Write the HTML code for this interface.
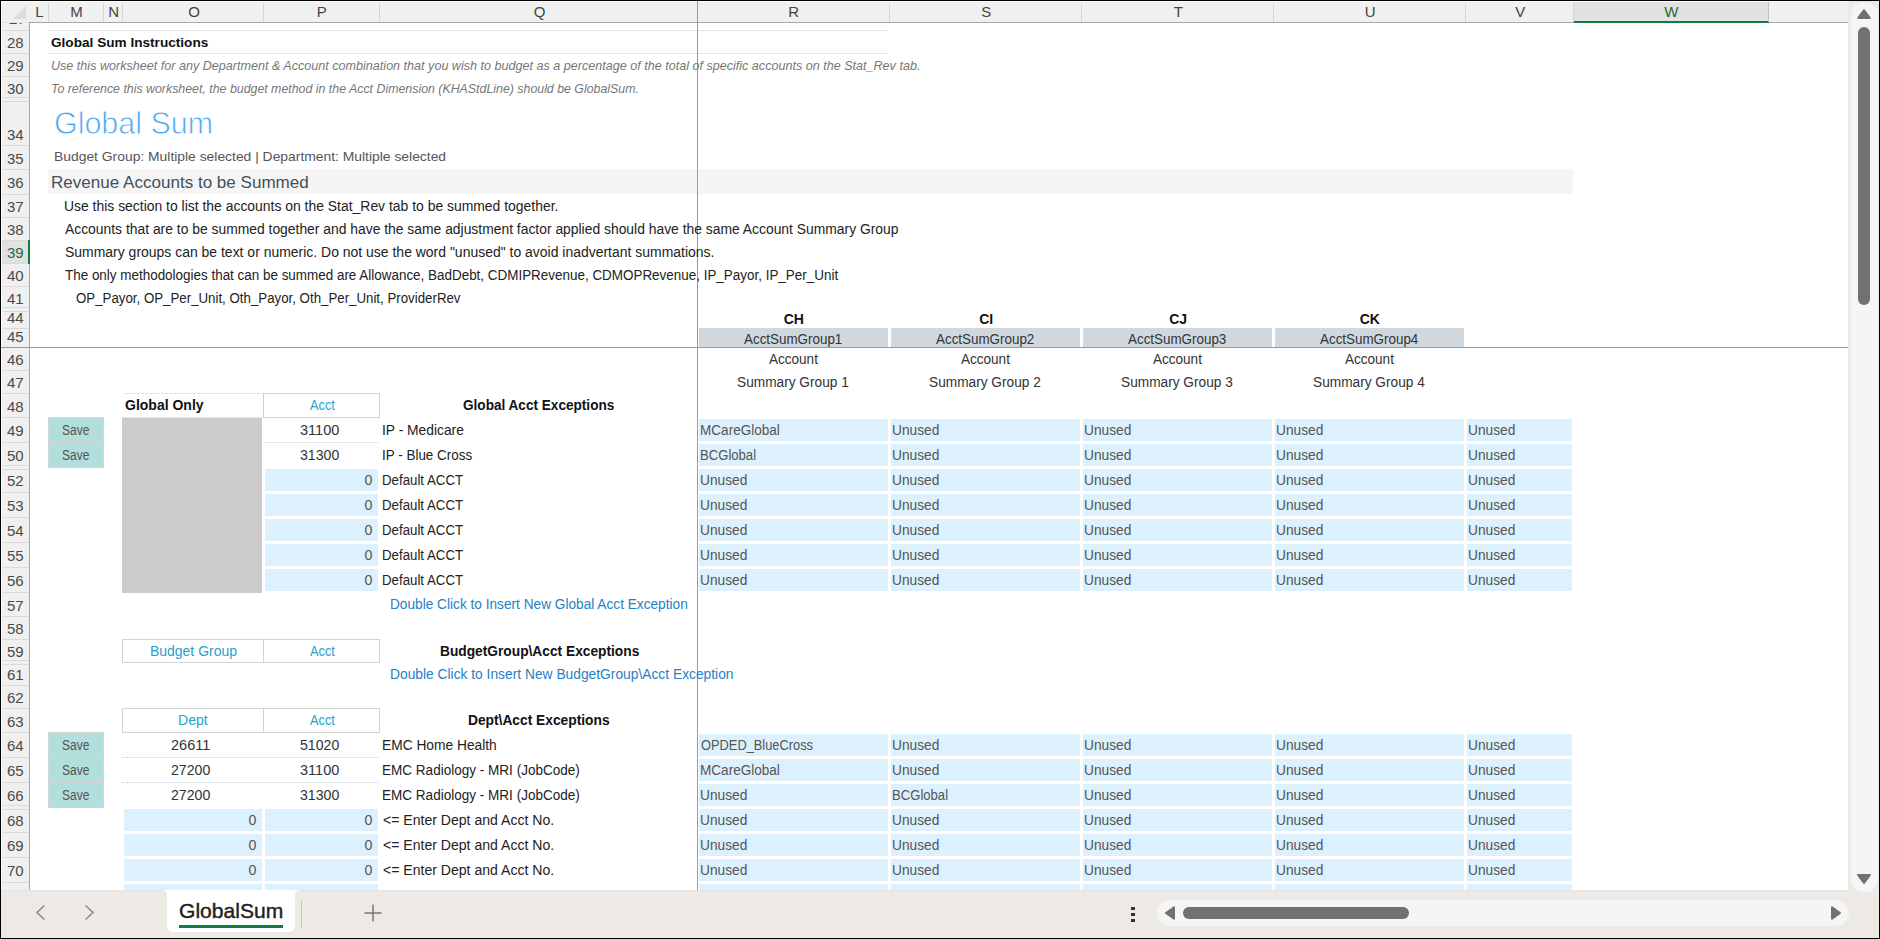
<!DOCTYPE html>
<html lang="en"><head><meta charset="utf-8"><title>GlobalSum</title>
<style>
html,body{margin:0;padding:0;background:#fff;}
body{width:1880px;height:939px;position:relative;overflow:hidden;font-family:'Liberation Sans', sans-serif;}
#app div,#app svg,#app span{position:absolute;}
#app span{white-space:pre;transform-origin:0 0;}
#app{position:absolute;left:0;top:0;width:1880px;height:939px;overflow:hidden;}
</style></head><body><div id="app">
<div style="left:0px;top:0px;width:1880px;height:939px;background:#000;"></div>
<div style="left:1px;top:1px;width:1878px;height:937px;background:#fff;"></div>
<div style="left:2px;top:2px;width:1846px;height:20px;background:#f0f0f0;"></div>
<div style="left:2px;top:22px;width:27px;height:1px;background:#e2e2e2;"></div>
<div style="left:29px;top:22px;width:1819px;height:1px;background:#a8a8a8;"></div>
<div style="left:2px;top:23px;width:27px;height:867px;background:#f0f0f0;"></div>
<div style="left:29px;top:22px;width:1px;height:868px;background:#a8a8a8;"></div>
<svg style="left:12px;top:5px" width="15" height="15" viewBox="0 0 15 15"><path d="M14 0.7V14H0.7Z" fill="#dddddd"/></svg>
<div style="left:48px;top:3px;width:1px;height:19px;background:#d6d6d6;"></div>
<div style="left:103px;top:3px;width:1px;height:19px;background:#d6d6d6;"></div>
<div style="left:122px;top:3px;width:1px;height:19px;background:#d6d6d6;"></div>
<div style="left:263px;top:3px;width:1px;height:19px;background:#d6d6d6;"></div>
<div style="left:379px;top:3px;width:1px;height:19px;background:#d6d6d6;"></div>
<div style="left:697px;top:3px;width:1px;height:19px;background:#d6d6d6;"></div>
<div style="left:889px;top:3px;width:1px;height:19px;background:#d6d6d6;"></div>
<div style="left:1081px;top:3px;width:1px;height:19px;background:#d6d6d6;"></div>
<div style="left:1273px;top:3px;width:1px;height:19px;background:#d6d6d6;"></div>
<div style="left:1465px;top:3px;width:1px;height:19px;background:#d6d6d6;"></div>
<div style="left:1573px;top:3px;width:1px;height:19px;background:#d6d6d6;"></div>
<div style="left:1574px;top:2px;width:195px;height:19px;background:#e1e1e1;"></div>
<div style="left:1574px;top:21px;width:195px;height:2px;background:#107c41;"></div>
<div style="left:1848px;top:3px;width:1px;height:19px;background:#d6d6d6;"></div>
<div style="left:1768px;top:2px;width:1px;height:20px;background:#c4c4c4;"></div>
<div style="left:2px;top:30px;width:27px;height:1px;background:#dadada;"></div>
<div style="left:2px;top:53px;width:27px;height:1px;background:#dadada;"></div>
<div style="left:2px;top:76px;width:27px;height:1px;background:#dadada;"></div>
<div style="left:2px;top:97px;width:27px;height:1px;background:#dadada;"></div>
<div style="left:2px;top:101px;width:27px;height:1px;background:#dadada;"></div>
<div style="left:2px;top:145px;width:27px;height:1px;background:#dadada;"></div>
<div style="left:2px;top:169px;width:27px;height:1px;background:#dadada;"></div>
<div style="left:2px;top:194px;width:27px;height:1px;background:#dadada;"></div>
<div style="left:2px;top:217px;width:27px;height:1px;background:#dadada;"></div>
<div style="left:2px;top:240px;width:27px;height:1px;background:#dadada;"></div>
<div style="left:2px;top:263px;width:27px;height:1px;background:#dadada;"></div>
<div style="left:2px;top:241px;width:27px;height:22px;background:#e1e1e1;"></div>
<div style="left:28px;top:240px;width:2px;height:24px;background:#107c41;"></div>
<div style="left:2px;top:286px;width:27px;height:1px;background:#dadada;"></div>
<div style="left:2px;top:307px;width:27px;height:1px;background:#dadada;"></div>
<div style="left:2px;top:311px;width:27px;height:1px;background:#dadada;"></div>
<div style="left:2px;top:328px;width:27px;height:1px;background:#dadada;"></div>
<div style="left:2px;top:347px;width:27px;height:1px;background:#dadada;"></div>
<div style="left:2px;top:370px;width:27px;height:1px;background:#dadada;"></div>
<div style="left:2px;top:393px;width:27px;height:1px;background:#dadada;"></div>
<div style="left:2px;top:417px;width:27px;height:1px;background:#dadada;"></div>
<div style="left:2px;top:442px;width:27px;height:1px;background:#dadada;"></div>
<div style="left:2px;top:465px;width:27px;height:1px;background:#dadada;"></div>
<div style="left:2px;top:469px;width:27px;height:1px;background:#dadada;"></div>
<div style="left:2px;top:492px;width:27px;height:1px;background:#dadada;"></div>
<div style="left:2px;top:517px;width:27px;height:1px;background:#dadada;"></div>
<div style="left:2px;top:542px;width:27px;height:1px;background:#dadada;"></div>
<div style="left:2px;top:567px;width:27px;height:1px;background:#dadada;"></div>
<div style="left:2px;top:592px;width:27px;height:1px;background:#dadada;"></div>
<div style="left:2px;top:616px;width:27px;height:1px;background:#dadada;"></div>
<div style="left:2px;top:639px;width:27px;height:1px;background:#dadada;"></div>
<div style="left:2px;top:660px;width:27px;height:1px;background:#dadada;"></div>
<div style="left:2px;top:664px;width:27px;height:1px;background:#dadada;"></div>
<div style="left:2px;top:685px;width:27px;height:1px;background:#dadada;"></div>
<div style="left:2px;top:708px;width:27px;height:1px;background:#dadada;"></div>
<div style="left:2px;top:732px;width:27px;height:1px;background:#dadada;"></div>
<div style="left:2px;top:757px;width:27px;height:1px;background:#dadada;"></div>
<div style="left:2px;top:782px;width:27px;height:1px;background:#dadada;"></div>
<div style="left:2px;top:805px;width:27px;height:1px;background:#dadada;"></div>
<div style="left:2px;top:809px;width:27px;height:1px;background:#dadada;"></div>
<div style="left:2px;top:832px;width:27px;height:1px;background:#dadada;"></div>
<div style="left:2px;top:857px;width:27px;height:1px;background:#dadada;"></div>
<div style="left:2px;top:882px;width:27px;height:1px;background:#dadada;"></div>
<div style="left:2px;top:23px;width:27px;height:7px;overflow:hidden"><span style="position:absolute;left:7px;top:-12px;font:15px 'Liberation Sans', sans-serif;color:#4a4a4a;line-height:15px">27</span></div>
<div style="left:49px;top:30px;width:840px;height:1px;background:repeating-linear-gradient(90deg,#d6dee3 0 3px,transparent 3px 4px)"></div>
<div style="left:48px;top:53px;width:840px;height:1px;background:repeating-linear-gradient(90deg,#d6dee3 0 3px,transparent 3px 4px)"></div>
<div style="left:48px;top:169px;width:1525px;height:25px;background:#f5f5f5;"></div>
<div style="left:699px;top:328px;width:189px;height:19px;background:#d0d8de;"></div>
<div style="left:891px;top:328px;width:189px;height:19px;background:#d0d8de;"></div>
<div style="left:1083px;top:328px;width:189px;height:19px;background:#d0d8de;"></div>
<div style="left:1275px;top:328px;width:189px;height:19px;background:#d0d8de;"></div>
<div style="left:1px;top:347px;width:1847px;height:1px;background:#9a9a9a;"></div>
<div style="left:697px;top:1px;width:1px;height:889px;background:#9a9a9a;"></div>
<div style="left:125px;top:393px;width:138px;height:1px;background:repeating-linear-gradient(90deg,#d6dee3 0 3px,transparent 3px 4px)"></div>
<div style="left:263px;top:393px;width:117px;height:25px;border:1px solid #d4d4d4;box-sizing:border-box;background:#fff;"></div>
<div style="left:122px;top:417px;width:140px;height:176px;background:#cccccc;"></div>
<div style="left:122px;top:417px;width:140px;height:1px;background:repeating-linear-gradient(90deg,#e8e8e8 0 3px,transparent 3px 4px)"></div>
<div style="left:48px;top:417px;width:56px;height:26px;background:#b2dedb;border:1px solid #d6d6d6;box-sizing:border-box;"></div>
<div style="left:48px;top:442px;width:56px;height:26px;background:#b2dedb;border:1px solid #d6d6d6;box-sizing:border-box;"></div>
<div style="left:48px;top:732px;width:56px;height:26px;background:#b2dedb;border:1px solid #d6d6d6;box-sizing:border-box;"></div>
<div style="left:48px;top:757px;width:56px;height:26px;background:#b2dedb;border:1px solid #d6d6d6;box-sizing:border-box;"></div>
<div style="left:48px;top:782px;width:56px;height:26px;background:#b2dedb;border:1px solid #d6d6d6;box-sizing:border-box;"></div>
<div style="left:699px;top:419px;width:189px;height:22px;background:#dcf1fd;"></div>
<div style="left:891px;top:419px;width:189px;height:22px;background:#dcf1fd;"></div>
<div style="left:1083px;top:419px;width:189px;height:22px;background:#dcf1fd;"></div>
<div style="left:1275px;top:419px;width:189px;height:22px;background:#dcf1fd;"></div>
<div style="left:1467px;top:419px;width:105px;height:22px;background:#dcf1fd;"></div>
<div style="left:699px;top:444px;width:189px;height:22px;background:#dcf1fd;"></div>
<div style="left:891px;top:444px;width:189px;height:22px;background:#dcf1fd;"></div>
<div style="left:1083px;top:444px;width:189px;height:22px;background:#dcf1fd;"></div>
<div style="left:1275px;top:444px;width:189px;height:22px;background:#dcf1fd;"></div>
<div style="left:1467px;top:444px;width:105px;height:22px;background:#dcf1fd;"></div>
<div style="left:265px;top:442px;width:114px;height:1px;background:repeating-linear-gradient(90deg,#d6dee3 0 3px,transparent 3px 4px)"></div>
<div style="left:265px;top:469px;width:113px;height:22px;background:#dcf1fd;"></div>
<div style="left:699px;top:469px;width:189px;height:22px;background:#dcf1fd;"></div>
<div style="left:891px;top:469px;width:189px;height:22px;background:#dcf1fd;"></div>
<div style="left:1083px;top:469px;width:189px;height:22px;background:#dcf1fd;"></div>
<div style="left:1275px;top:469px;width:189px;height:22px;background:#dcf1fd;"></div>
<div style="left:1467px;top:469px;width:105px;height:22px;background:#dcf1fd;"></div>
<div style="left:265px;top:494px;width:113px;height:22px;background:#dcf1fd;"></div>
<div style="left:699px;top:494px;width:189px;height:22px;background:#dcf1fd;"></div>
<div style="left:891px;top:494px;width:189px;height:22px;background:#dcf1fd;"></div>
<div style="left:1083px;top:494px;width:189px;height:22px;background:#dcf1fd;"></div>
<div style="left:1275px;top:494px;width:189px;height:22px;background:#dcf1fd;"></div>
<div style="left:1467px;top:494px;width:105px;height:22px;background:#dcf1fd;"></div>
<div style="left:265px;top:519px;width:113px;height:22px;background:#dcf1fd;"></div>
<div style="left:699px;top:519px;width:189px;height:22px;background:#dcf1fd;"></div>
<div style="left:891px;top:519px;width:189px;height:22px;background:#dcf1fd;"></div>
<div style="left:1083px;top:519px;width:189px;height:22px;background:#dcf1fd;"></div>
<div style="left:1275px;top:519px;width:189px;height:22px;background:#dcf1fd;"></div>
<div style="left:1467px;top:519px;width:105px;height:22px;background:#dcf1fd;"></div>
<div style="left:265px;top:544px;width:113px;height:22px;background:#dcf1fd;"></div>
<div style="left:699px;top:544px;width:189px;height:22px;background:#dcf1fd;"></div>
<div style="left:891px;top:544px;width:189px;height:22px;background:#dcf1fd;"></div>
<div style="left:1083px;top:544px;width:189px;height:22px;background:#dcf1fd;"></div>
<div style="left:1275px;top:544px;width:189px;height:22px;background:#dcf1fd;"></div>
<div style="left:1467px;top:544px;width:105px;height:22px;background:#dcf1fd;"></div>
<div style="left:265px;top:569px;width:113px;height:22px;background:#dcf1fd;"></div>
<div style="left:699px;top:569px;width:189px;height:22px;background:#dcf1fd;"></div>
<div style="left:891px;top:569px;width:189px;height:22px;background:#dcf1fd;"></div>
<div style="left:1083px;top:569px;width:189px;height:22px;background:#dcf1fd;"></div>
<div style="left:1275px;top:569px;width:189px;height:22px;background:#dcf1fd;"></div>
<div style="left:1467px;top:569px;width:105px;height:22px;background:#dcf1fd;"></div>
<div style="left:122px;top:639px;width:142px;height:24px;border:1px solid #d4d4d4;box-sizing:border-box;background:#fff;"></div>
<div style="left:263px;top:639px;width:117px;height:24px;border:1px solid #d4d4d4;box-sizing:border-box;background:#fff;"></div>
<div style="left:122px;top:708px;width:142px;height:25px;border:1px solid #d4d4d4;box-sizing:border-box;background:#fff;"></div>
<div style="left:263px;top:708px;width:117px;height:25px;border:1px solid #d4d4d4;box-sizing:border-box;background:#fff;"></div>
<div style="left:699px;top:734px;width:189px;height:22px;background:#dcf1fd;"></div>
<div style="left:891px;top:734px;width:189px;height:22px;background:#dcf1fd;"></div>
<div style="left:1083px;top:734px;width:189px;height:22px;background:#dcf1fd;"></div>
<div style="left:1275px;top:734px;width:189px;height:22px;background:#dcf1fd;"></div>
<div style="left:1467px;top:734px;width:105px;height:22px;background:#dcf1fd;"></div>
<div style="left:699px;top:759px;width:189px;height:22px;background:#dcf1fd;"></div>
<div style="left:891px;top:759px;width:189px;height:22px;background:#dcf1fd;"></div>
<div style="left:1083px;top:759px;width:189px;height:22px;background:#dcf1fd;"></div>
<div style="left:1275px;top:759px;width:189px;height:22px;background:#dcf1fd;"></div>
<div style="left:1467px;top:759px;width:105px;height:22px;background:#dcf1fd;"></div>
<div style="left:699px;top:784px;width:189px;height:22px;background:#dcf1fd;"></div>
<div style="left:891px;top:784px;width:189px;height:22px;background:#dcf1fd;"></div>
<div style="left:1083px;top:784px;width:189px;height:22px;background:#dcf1fd;"></div>
<div style="left:1275px;top:784px;width:189px;height:22px;background:#dcf1fd;"></div>
<div style="left:1467px;top:784px;width:105px;height:22px;background:#dcf1fd;"></div>
<div style="left:122px;top:757px;width:257px;height:1px;background:repeating-linear-gradient(90deg,#d6dee3 0 3px,transparent 3px 4px)"></div>
<div style="left:122px;top:782px;width:257px;height:1px;background:repeating-linear-gradient(90deg,#d6dee3 0 3px,transparent 3px 4px)"></div>
<div style="left:124px;top:809px;width:138px;height:22px;background:#dcf1fd;"></div>
<div style="left:265px;top:809px;width:113px;height:22px;background:#dcf1fd;"></div>
<div style="left:699px;top:809px;width:189px;height:22px;background:#dcf1fd;"></div>
<div style="left:891px;top:809px;width:189px;height:22px;background:#dcf1fd;"></div>
<div style="left:1083px;top:809px;width:189px;height:22px;background:#dcf1fd;"></div>
<div style="left:1275px;top:809px;width:189px;height:22px;background:#dcf1fd;"></div>
<div style="left:1467px;top:809px;width:105px;height:22px;background:#dcf1fd;"></div>
<div style="left:124px;top:834px;width:138px;height:22px;background:#dcf1fd;"></div>
<div style="left:265px;top:834px;width:113px;height:22px;background:#dcf1fd;"></div>
<div style="left:699px;top:834px;width:189px;height:22px;background:#dcf1fd;"></div>
<div style="left:891px;top:834px;width:189px;height:22px;background:#dcf1fd;"></div>
<div style="left:1083px;top:834px;width:189px;height:22px;background:#dcf1fd;"></div>
<div style="left:1275px;top:834px;width:189px;height:22px;background:#dcf1fd;"></div>
<div style="left:1467px;top:834px;width:105px;height:22px;background:#dcf1fd;"></div>
<div style="left:124px;top:859px;width:138px;height:22px;background:#dcf1fd;"></div>
<div style="left:265px;top:859px;width:113px;height:22px;background:#dcf1fd;"></div>
<div style="left:699px;top:859px;width:189px;height:22px;background:#dcf1fd;"></div>
<div style="left:891px;top:859px;width:189px;height:22px;background:#dcf1fd;"></div>
<div style="left:1083px;top:859px;width:189px;height:22px;background:#dcf1fd;"></div>
<div style="left:1275px;top:859px;width:189px;height:22px;background:#dcf1fd;"></div>
<div style="left:1467px;top:859px;width:105px;height:22px;background:#dcf1fd;"></div>
<div style="left:124px;top:884px;width:138px;height:6px;background:#dcf1fd;"></div>
<div style="left:265px;top:884px;width:113px;height:6px;background:#dcf1fd;"></div>
<div style="left:699px;top:884px;width:189px;height:6px;background:#dcf1fd;"></div>
<div style="left:891px;top:884px;width:189px;height:6px;background:#dcf1fd;"></div>
<div style="left:1083px;top:884px;width:189px;height:6px;background:#dcf1fd;"></div>
<div style="left:1275px;top:884px;width:189px;height:6px;background:#dcf1fd;"></div>
<div style="left:1467px;top:884px;width:105px;height:6px;background:#dcf1fd;"></div>
<div style="left:1px;top:890px;width:1878px;height:48px;background:#edeae6;"></div>
<div style="left:1848px;top:1px;width:31px;height:889px;background:#edeae6;"></div>
<div style="left:1851px;top:2px;width:27px;height:890px;background:#f5f5f5;border-radius:13px;"></div>
<div style="left:1858px;top:27px;width:12px;height:278px;background:#717171;border-radius:6px;"></div>
<svg style="left:1855px;top:7px" width="18" height="14" viewBox="0 0 18 14"><path d="M9 3.2L14.8 11H3.2Z" fill="#717171" stroke="#717171" stroke-width="2" stroke-linejoin="round"/></svg>
<svg style="left:1855px;top:872px" width="18" height="14" viewBox="0 0 18 14"><path d="M9 11L15 3H3Z" fill="#717171" stroke="#717171" stroke-width="2" stroke-linejoin="round"/></svg>
<div style="left:1px;top:890px;width:1847px;height:1px;background:#e4e2df;"></div>
<div style="left:162px;top:890px;width:138px;height:5px;background:#fff;"></div>
<div style="left:162px;top:890px;width:5px;height:5px;background:#edeae6;border-radius:0 5px 0 0;"></div>
<div style="left:295px;top:890px;width:5px;height:5px;background:#edeae6;border-radius:5px 0 0 0;"></div>
<div style="left:167px;top:890px;width:128px;height:42px;background:#fff;border-radius:0 0 6px 6px;"></div>
<div style="left:179px;top:925px;width:104px;height:3px;background:#107c41;"></div>
<div style="left:301px;top:900px;width:1px;height:28px;background:#c8c6c4;"></div>
<svg style="left:30px;top:900px" width="80" height="26" viewBox="0 0 80 26"><path d="M14.5 5.5L7 12.5L14.5 19.5" fill="none" stroke="#8d8b89" stroke-width="1.6"/><path d="M55.5 5.5L63 12.5L55.5 19.5" fill="none" stroke="#8d8b89" stroke-width="1.6"/></svg>
<svg style="left:363px;top:903px" width="20" height="20" viewBox="0 0 20 20"><path d="M10 1.5V18.5M1.5 10H18.5" fill="none" stroke="#7a7876" stroke-width="1.5"/></svg>
<div style="left:1131px;top:907px;width:4px;height:3px;background:#333;"></div>
<div style="left:1131px;top:913px;width:4px;height:3px;background:#333;"></div>
<div style="left:1131px;top:919px;width:4px;height:3px;background:#333;"></div>
<div style="left:1157px;top:900px;width:692px;height:26px;background:#f5f5f5;border-radius:13px;"></div>
<div style="left:1183px;top:907px;width:226px;height:12px;background:#717171;border-radius:6px;"></div>
<svg style="left:1163px;top:904px" width="14" height="18" viewBox="0 0 14 18"><path d="M3 9L11 3.2V14.8Z" fill="#717171" stroke="#717171" stroke-width="2" stroke-linejoin="round"/></svg>
<svg style="left:1829px;top:904px" width="14" height="18" viewBox="0 0 14 18"><path d="M11 9L3 3.2V14.8Z" fill="#717171" stroke="#717171" stroke-width="2" stroke-linejoin="round"/></svg>
<span style="left:35.20px;top:3.00px;font:400 15px 'Liberation Sans', sans-serif;line-height:18px;color:#444;">L</span>
<span style="left:70.20px;top:3.00px;font:400 15px 'Liberation Sans', sans-serif;line-height:18px;color:#444;">M</span>
<span style="left:108.20px;top:3.00px;font:400 15px 'Liberation Sans', sans-serif;line-height:18px;color:#444;">N</span>
<span style="left:188.20px;top:3.00px;font:400 15px 'Liberation Sans', sans-serif;line-height:18px;color:#444;">O</span>
<span style="left:316.70px;top:3.00px;font:400 15px 'Liberation Sans', sans-serif;line-height:18px;color:#444;">P</span>
<span style="left:533.70px;top:3.00px;font:400 15px 'Liberation Sans', sans-serif;line-height:18px;color:#444;">Q</span>
<span style="left:788.20px;top:3.00px;font:400 15px 'Liberation Sans', sans-serif;line-height:18px;color:#444;">R</span>
<span style="left:981.20px;top:3.00px;font:400 15px 'Liberation Sans', sans-serif;line-height:18px;color:#444;">S</span>
<span style="left:1173.70px;top:3.00px;font:400 15px 'Liberation Sans', sans-serif;line-height:18px;color:#444;">T</span>
<span style="left:1364.70px;top:3.00px;font:400 15px 'Liberation Sans', sans-serif;line-height:18px;color:#444;">U</span>
<span style="left:1515.20px;top:3.00px;font:400 15px 'Liberation Sans', sans-serif;line-height:18px;color:#444;">V</span>
<span style="left:1664.20px;top:3.00px;font:400 15px 'Liberation Sans', sans-serif;line-height:18px;color:#1e6b41;">W</span>
<span style="left:7.03px;top:34.00px;font:400 15px 'Liberation Sans', sans-serif;line-height:18px;color:#4a4a4a;">28</span>
<span style="left:7.03px;top:57.00px;font:400 15px 'Liberation Sans', sans-serif;line-height:18px;color:#4a4a4a;">29</span>
<span style="left:7.03px;top:80.00px;font:400 15px 'Liberation Sans', sans-serif;line-height:18px;color:#4a4a4a;">30</span>
<span style="left:7.03px;top:126.00px;font:400 15px 'Liberation Sans', sans-serif;line-height:18px;color:#4a4a4a;">34</span>
<span style="left:7.03px;top:150.00px;font:400 15px 'Liberation Sans', sans-serif;line-height:18px;color:#4a4a4a;">35</span>
<span style="left:7.03px;top:174.00px;font:400 15px 'Liberation Sans', sans-serif;line-height:18px;color:#4a4a4a;">36</span>
<span style="left:7.03px;top:198.00px;font:400 15px 'Liberation Sans', sans-serif;line-height:18px;color:#4a4a4a;">37</span>
<span style="left:7.03px;top:221.00px;font:400 15px 'Liberation Sans', sans-serif;line-height:18px;color:#4a4a4a;">38</span>
<span style="left:7.03px;top:244.00px;font:400 15px 'Liberation Sans', sans-serif;line-height:18px;color:#1e6b41;">39</span>
<span style="left:7.03px;top:267.00px;font:400 15px 'Liberation Sans', sans-serif;line-height:18px;color:#4a4a4a;">40</span>
<span style="left:7.03px;top:290.00px;font:400 15px 'Liberation Sans', sans-serif;line-height:18px;color:#4a4a4a;">41</span>
<span style="left:7.03px;top:309.00px;font:400 15px 'Liberation Sans', sans-serif;line-height:18px;color:#4a4a4a;">44</span>
<span style="left:7.03px;top:328.00px;font:400 15px 'Liberation Sans', sans-serif;line-height:18px;color:#4a4a4a;">45</span>
<span style="left:7.03px;top:351.00px;font:400 15px 'Liberation Sans', sans-serif;line-height:18px;color:#4a4a4a;">46</span>
<span style="left:7.03px;top:374.00px;font:400 15px 'Liberation Sans', sans-serif;line-height:18px;color:#4a4a4a;">47</span>
<span style="left:7.03px;top:398.00px;font:400 15px 'Liberation Sans', sans-serif;line-height:18px;color:#4a4a4a;">48</span>
<span style="left:7.03px;top:422.00px;font:400 15px 'Liberation Sans', sans-serif;line-height:18px;color:#4a4a4a;">49</span>
<span style="left:7.03px;top:447.00px;font:400 15px 'Liberation Sans', sans-serif;line-height:18px;color:#4a4a4a;">50</span>
<span style="left:7.03px;top:472.00px;font:400 15px 'Liberation Sans', sans-serif;line-height:18px;color:#4a4a4a;">52</span>
<span style="left:7.03px;top:497.00px;font:400 15px 'Liberation Sans', sans-serif;line-height:18px;color:#4a4a4a;">53</span>
<span style="left:7.03px;top:522.00px;font:400 15px 'Liberation Sans', sans-serif;line-height:18px;color:#4a4a4a;">54</span>
<span style="left:7.03px;top:547.00px;font:400 15px 'Liberation Sans', sans-serif;line-height:18px;color:#4a4a4a;">55</span>
<span style="left:7.03px;top:572.00px;font:400 15px 'Liberation Sans', sans-serif;line-height:18px;color:#4a4a4a;">56</span>
<span style="left:7.03px;top:597.00px;font:400 15px 'Liberation Sans', sans-serif;line-height:18px;color:#4a4a4a;">57</span>
<span style="left:7.03px;top:620.00px;font:400 15px 'Liberation Sans', sans-serif;line-height:18px;color:#4a4a4a;">58</span>
<span style="left:7.03px;top:643.00px;font:400 15px 'Liberation Sans', sans-serif;line-height:18px;color:#4a4a4a;">59</span>
<span style="left:7.03px;top:666.00px;font:400 15px 'Liberation Sans', sans-serif;line-height:18px;color:#4a4a4a;">61</span>
<span style="left:7.03px;top:689.00px;font:400 15px 'Liberation Sans', sans-serif;line-height:18px;color:#4a4a4a;">62</span>
<span style="left:7.03px;top:713.00px;font:400 15px 'Liberation Sans', sans-serif;line-height:18px;color:#4a4a4a;">63</span>
<span style="left:7.03px;top:737.00px;font:400 15px 'Liberation Sans', sans-serif;line-height:18px;color:#4a4a4a;">64</span>
<span style="left:7.03px;top:762.00px;font:400 15px 'Liberation Sans', sans-serif;line-height:18px;color:#4a4a4a;">65</span>
<span style="left:7.03px;top:787.00px;font:400 15px 'Liberation Sans', sans-serif;line-height:18px;color:#4a4a4a;">66</span>
<span style="left:7.03px;top:812.00px;font:400 15px 'Liberation Sans', sans-serif;line-height:18px;color:#4a4a4a;">68</span>
<span style="left:7.03px;top:837.00px;font:400 15px 'Liberation Sans', sans-serif;line-height:18px;color:#4a4a4a;">69</span>
<span style="left:7.03px;top:862.00px;font:400 15px 'Liberation Sans', sans-serif;line-height:18px;color:#4a4a4a;">70</span>
<span style="left:51.20px;top:35.00px;font:700 13.5px 'Liberation Sans', sans-serif;line-height:16px;color:#111;transform:scaleX(1.0083);">Global Sum Instructions</span>
<span style="left:50.90px;top:59.00px;font:italic 400 11.9px 'Liberation Sans', sans-serif;line-height:14px;color:#777;transform:scaleX(1.0579);">Use this worksheet for any Department &amp; Account combination that you wish to budget as a percentage of the total of specific accounts on the Stat_Rev tab.</span>
<span style="left:51.26px;top:82.00px;font:italic 400 11.9px 'Liberation Sans', sans-serif;line-height:14px;color:#777;transform:scaleX(1.0396);">To reference this worksheet, the budget method in the Acct Dimension (KHAStdLine) should be GlobalSum.</span>
<span style="left:53.64px;top:104.00px;font:400 31.6px 'Liberation Sans', sans-serif;line-height:38px;color:#4ba7f4;-webkit-text-stroke:0.8px #fff;transform:scaleX(0.9635);">Global Sum</span>
<span style="left:54.47px;top:149.00px;font:400 13.5px 'Liberation Sans', sans-serif;line-height:16px;color:#555;transform:scaleX(1.0271);">Budget Group: Multiple selected | Department: Multiple selected</span>
<span style="left:50.97px;top:172.00px;font:400 16.5px 'Liberation Sans', sans-serif;line-height:20px;color:#44505c;transform:scaleX(1.0332);">Revenue Accounts to be Summed</span>
<span style="left:63.51px;top:198.00px;font:400 14px 'Liberation Sans', sans-serif;line-height:17px;color:#222;transform:scaleX(0.9942);">Use this section to list the accounts on the Stat_Rev tab to be summed together.</span>
<span style="left:64.50px;top:221.00px;font:400 14px 'Liberation Sans', sans-serif;line-height:17px;color:#222;transform:scaleX(0.9908);">Accounts that are to be summed together and have the same adjustment factor applied should have the same Account Summary Group</span>
<span style="left:64.50px;top:244.00px;font:400 14px 'Liberation Sans', sans-serif;line-height:17px;color:#222;transform:scaleX(0.9973);">Summary groups can be text or numeric. Do not use the word "unused" to avoid inadvertant summations.</span>
<span style="left:64.50px;top:267.00px;font:400 14px 'Liberation Sans', sans-serif;line-height:17px;color:#222;transform:scaleX(0.9599);">The only methodologies that can be summed are Allowance, BadDebt, CDMIPRevenue, CDMOPRevenue, IP_Payor, IP_Per_Unit</span>
<span style="left:76.00px;top:290.00px;font:400 14px 'Liberation Sans', sans-serif;line-height:17px;color:#222;transform:scaleX(0.9484);">OP_Payor, OP_Per_Unit, Oth_Payor, Oth_Per_Unit, ProviderRev</span>
<span style="left:783.69px;top:311.00px;font:700 14px 'Liberation Sans', sans-serif;line-height:17px;color:#111;">CH</span>
<span style="left:743.50px;top:331.00px;font:400 14px 'Liberation Sans', sans-serif;line-height:17px;color:#333;transform:scaleX(0.9570);">AcctSumGroup1</span>
<span style="left:769.25px;top:351.00px;font:400 14px 'Liberation Sans', sans-serif;line-height:17px;color:#333;transform:scaleX(0.9665);">Account</span>
<span style="left:737.25px;top:374.00px;font:400 14px 'Liberation Sans', sans-serif;line-height:17px;color:#333;transform:scaleX(0.9774);">Summary Group 1</span>
<span style="left:979.19px;top:311.00px;font:700 14px 'Liberation Sans', sans-serif;line-height:17px;color:#111;">CI</span>
<span style="left:935.50px;top:331.00px;font:400 14px 'Liberation Sans', sans-serif;line-height:17px;color:#333;transform:scaleX(0.9570);">AcctSumGroup2</span>
<span style="left:961.25px;top:351.00px;font:400 14px 'Liberation Sans', sans-serif;line-height:17px;color:#333;transform:scaleX(0.9665);">Account</span>
<span style="left:929.25px;top:374.00px;font:400 14px 'Liberation Sans', sans-serif;line-height:17px;color:#333;transform:scaleX(0.9774);">Summary Group 2</span>
<span style="left:1169.19px;top:311.00px;font:700 14px 'Liberation Sans', sans-serif;line-height:17px;color:#111;">CJ</span>
<span style="left:1127.50px;top:331.00px;font:400 14px 'Liberation Sans', sans-serif;line-height:17px;color:#333;transform:scaleX(0.9570);">AcctSumGroup3</span>
<span style="left:1153.25px;top:351.00px;font:400 14px 'Liberation Sans', sans-serif;line-height:17px;color:#333;transform:scaleX(0.9665);">Account</span>
<span style="left:1121.25px;top:374.00px;font:400 14px 'Liberation Sans', sans-serif;line-height:17px;color:#333;transform:scaleX(0.9774);">Summary Group 3</span>
<span style="left:1359.69px;top:311.00px;font:700 14px 'Liberation Sans', sans-serif;line-height:17px;color:#111;">CK</span>
<span style="left:1319.50px;top:331.00px;font:400 14px 'Liberation Sans', sans-serif;line-height:17px;color:#333;transform:scaleX(0.9570);">AcctSumGroup4</span>
<span style="left:1345.25px;top:351.00px;font:400 14px 'Liberation Sans', sans-serif;line-height:17px;color:#333;transform:scaleX(0.9665);">Account</span>
<span style="left:1313.25px;top:374.00px;font:400 14px 'Liberation Sans', sans-serif;line-height:17px;color:#333;transform:scaleX(0.9774);">Summary Group 4</span>
<span style="left:125.00px;top:397.00px;font:700 14px 'Liberation Sans', sans-serif;line-height:17px;color:#111;">Global Only</span>
<span style="left:309.50px;top:397.00px;font:400 14px 'Liberation Sans', sans-serif;line-height:17px;color:#1fa2cf;transform:scaleX(0.9145);">Acct</span>
<span style="left:463.00px;top:397.00px;font:700 14px 'Liberation Sans', sans-serif;line-height:17px;color:#111;transform:scaleX(0.9707);">Global Acct Exceptions</span>
<span style="left:62.25px;top:422.00px;font:400 14px 'Liberation Sans', sans-serif;line-height:17px;color:#555;transform:scaleX(0.8561);">Save</span>
<span style="left:300.30px;top:422.00px;font:400 14.2px 'Liberation Sans', sans-serif;line-height:17px;color:#333;transform:scaleX(1.0232);">31100</span>
<span style="left:381.61px;top:422.00px;font:400 14px 'Liberation Sans', sans-serif;line-height:17px;color:#222;transform:scaleX(0.9859);">IP - Medicare</span>
<span style="left:699.73px;top:422.00px;font:400 14px 'Liberation Sans', sans-serif;line-height:17px;color:#555;transform:scaleX(0.9685);">MCareGlobal</span>
<span style="left:891.72px;top:422.00px;font:400 14px 'Liberation Sans', sans-serif;line-height:17px;color:#555;transform:scaleX(0.9813);">Unused</span>
<span style="left:1083.72px;top:422.00px;font:400 14px 'Liberation Sans', sans-serif;line-height:17px;color:#555;transform:scaleX(0.9813);">Unused</span>
<span style="left:1275.72px;top:422.00px;font:400 14px 'Liberation Sans', sans-serif;line-height:17px;color:#555;transform:scaleX(0.9813);">Unused</span>
<span style="left:1467.72px;top:422.00px;font:400 14px 'Liberation Sans', sans-serif;line-height:17px;color:#555;transform:scaleX(0.9813);">Unused</span>
<span style="left:62.25px;top:447.00px;font:400 14px 'Liberation Sans', sans-serif;line-height:17px;color:#555;transform:scaleX(0.8561);">Save</span>
<span style="left:300.30px;top:447.00px;font:400 14.2px 'Liberation Sans', sans-serif;line-height:17px;color:#333;transform:scaleX(0.9959);">31300</span>
<span style="left:381.64px;top:447.00px;font:400 14px 'Liberation Sans', sans-serif;line-height:17px;color:#222;transform:scaleX(0.9609);">IP - Blue Cross</span>
<span style="left:699.76px;top:447.00px;font:400 14px 'Liberation Sans', sans-serif;line-height:17px;color:#555;transform:scaleX(0.9353);">BCGlobal</span>
<span style="left:891.72px;top:447.00px;font:400 14px 'Liberation Sans', sans-serif;line-height:17px;color:#555;transform:scaleX(0.9813);">Unused</span>
<span style="left:1083.72px;top:447.00px;font:400 14px 'Liberation Sans', sans-serif;line-height:17px;color:#555;transform:scaleX(0.9813);">Unused</span>
<span style="left:1275.72px;top:447.00px;font:400 14px 'Liberation Sans', sans-serif;line-height:17px;color:#555;transform:scaleX(0.9813);">Unused</span>
<span style="left:1467.72px;top:447.00px;font:400 14px 'Liberation Sans', sans-serif;line-height:17px;color:#555;transform:scaleX(0.9813);">Unused</span>
<span style="left:364.50px;top:472.00px;font:400 14.2px 'Liberation Sans', sans-serif;line-height:17px;color:#555;">0</span>
<span style="left:381.65px;top:472.00px;font:400 14px 'Liberation Sans', sans-serif;line-height:17px;color:#222;transform:scaleX(0.9475);">Default ACCT</span>
<span style="left:699.72px;top:472.00px;font:400 14px 'Liberation Sans', sans-serif;line-height:17px;color:#555;transform:scaleX(0.9813);">Unused</span>
<span style="left:891.72px;top:472.00px;font:400 14px 'Liberation Sans', sans-serif;line-height:17px;color:#555;transform:scaleX(0.9813);">Unused</span>
<span style="left:1083.72px;top:472.00px;font:400 14px 'Liberation Sans', sans-serif;line-height:17px;color:#555;transform:scaleX(0.9813);">Unused</span>
<span style="left:1275.72px;top:472.00px;font:400 14px 'Liberation Sans', sans-serif;line-height:17px;color:#555;transform:scaleX(0.9813);">Unused</span>
<span style="left:1467.72px;top:472.00px;font:400 14px 'Liberation Sans', sans-serif;line-height:17px;color:#555;transform:scaleX(0.9813);">Unused</span>
<span style="left:364.50px;top:497.00px;font:400 14.2px 'Liberation Sans', sans-serif;line-height:17px;color:#555;">0</span>
<span style="left:381.65px;top:497.00px;font:400 14px 'Liberation Sans', sans-serif;line-height:17px;color:#222;transform:scaleX(0.9475);">Default ACCT</span>
<span style="left:699.72px;top:497.00px;font:400 14px 'Liberation Sans', sans-serif;line-height:17px;color:#555;transform:scaleX(0.9813);">Unused</span>
<span style="left:891.72px;top:497.00px;font:400 14px 'Liberation Sans', sans-serif;line-height:17px;color:#555;transform:scaleX(0.9813);">Unused</span>
<span style="left:1083.72px;top:497.00px;font:400 14px 'Liberation Sans', sans-serif;line-height:17px;color:#555;transform:scaleX(0.9813);">Unused</span>
<span style="left:1275.72px;top:497.00px;font:400 14px 'Liberation Sans', sans-serif;line-height:17px;color:#555;transform:scaleX(0.9813);">Unused</span>
<span style="left:1467.72px;top:497.00px;font:400 14px 'Liberation Sans', sans-serif;line-height:17px;color:#555;transform:scaleX(0.9813);">Unused</span>
<span style="left:364.50px;top:522.00px;font:400 14.2px 'Liberation Sans', sans-serif;line-height:17px;color:#555;">0</span>
<span style="left:381.65px;top:522.00px;font:400 14px 'Liberation Sans', sans-serif;line-height:17px;color:#222;transform:scaleX(0.9475);">Default ACCT</span>
<span style="left:699.72px;top:522.00px;font:400 14px 'Liberation Sans', sans-serif;line-height:17px;color:#555;transform:scaleX(0.9813);">Unused</span>
<span style="left:891.72px;top:522.00px;font:400 14px 'Liberation Sans', sans-serif;line-height:17px;color:#555;transform:scaleX(0.9813);">Unused</span>
<span style="left:1083.72px;top:522.00px;font:400 14px 'Liberation Sans', sans-serif;line-height:17px;color:#555;transform:scaleX(0.9813);">Unused</span>
<span style="left:1275.72px;top:522.00px;font:400 14px 'Liberation Sans', sans-serif;line-height:17px;color:#555;transform:scaleX(0.9813);">Unused</span>
<span style="left:1467.72px;top:522.00px;font:400 14px 'Liberation Sans', sans-serif;line-height:17px;color:#555;transform:scaleX(0.9813);">Unused</span>
<span style="left:364.50px;top:547.00px;font:400 14.2px 'Liberation Sans', sans-serif;line-height:17px;color:#555;">0</span>
<span style="left:381.65px;top:547.00px;font:400 14px 'Liberation Sans', sans-serif;line-height:17px;color:#222;transform:scaleX(0.9475);">Default ACCT</span>
<span style="left:699.72px;top:547.00px;font:400 14px 'Liberation Sans', sans-serif;line-height:17px;color:#555;transform:scaleX(0.9813);">Unused</span>
<span style="left:891.72px;top:547.00px;font:400 14px 'Liberation Sans', sans-serif;line-height:17px;color:#555;transform:scaleX(0.9813);">Unused</span>
<span style="left:1083.72px;top:547.00px;font:400 14px 'Liberation Sans', sans-serif;line-height:17px;color:#555;transform:scaleX(0.9813);">Unused</span>
<span style="left:1275.72px;top:547.00px;font:400 14px 'Liberation Sans', sans-serif;line-height:17px;color:#555;transform:scaleX(0.9813);">Unused</span>
<span style="left:1467.72px;top:547.00px;font:400 14px 'Liberation Sans', sans-serif;line-height:17px;color:#555;transform:scaleX(0.9813);">Unused</span>
<span style="left:364.50px;top:572.00px;font:400 14.2px 'Liberation Sans', sans-serif;line-height:17px;color:#555;">0</span>
<span style="left:381.65px;top:572.00px;font:400 14px 'Liberation Sans', sans-serif;line-height:17px;color:#222;transform:scaleX(0.9475);">Default ACCT</span>
<span style="left:699.72px;top:572.00px;font:400 14px 'Liberation Sans', sans-serif;line-height:17px;color:#555;transform:scaleX(0.9813);">Unused</span>
<span style="left:891.72px;top:572.00px;font:400 14px 'Liberation Sans', sans-serif;line-height:17px;color:#555;transform:scaleX(0.9813);">Unused</span>
<span style="left:1083.72px;top:572.00px;font:400 14px 'Liberation Sans', sans-serif;line-height:17px;color:#555;transform:scaleX(0.9813);">Unused</span>
<span style="left:1275.72px;top:572.00px;font:400 14px 'Liberation Sans', sans-serif;line-height:17px;color:#555;transform:scaleX(0.9813);">Unused</span>
<span style="left:1467.72px;top:572.00px;font:400 14px 'Liberation Sans', sans-serif;line-height:17px;color:#555;transform:scaleX(0.9813);">Unused</span>
<span style="left:389.77px;top:596.00px;font:400 14px 'Liberation Sans', sans-serif;line-height:17px;color:#2780c6;transform:scaleX(0.9761);">Double Click to Insert New Global Acct Exception</span>
<span style="left:149.88px;top:643.00px;font:400 14px 'Liberation Sans', sans-serif;line-height:17px;color:#1fa2cf;">Budget Group</span>
<span style="left:309.50px;top:643.00px;font:400 14px 'Liberation Sans', sans-serif;line-height:17px;color:#1fa2cf;transform:scaleX(0.9145);">Acct</span>
<span style="left:439.50px;top:643.00px;font:700 14px 'Liberation Sans', sans-serif;line-height:17px;color:#111;transform:scaleX(0.9816);">BudgetGroup\Acct Exceptions</span>
<span style="left:389.76px;top:666.00px;font:400 14px 'Liberation Sans', sans-serif;line-height:17px;color:#2780c6;transform:scaleX(0.9854);">Double Click to Insert New BudgetGroup\Acct Exception</span>
<span style="left:177.72px;top:712.00px;font:400 14px 'Liberation Sans', sans-serif;line-height:17px;color:#1fa2cf;transform:scaleX(1.0023);">Dept</span>
<span style="left:309.50px;top:712.00px;font:400 14px 'Liberation Sans', sans-serif;line-height:17px;color:#1fa2cf;transform:scaleX(0.9145);">Acct</span>
<span style="left:468.23px;top:712.00px;font:700 14px 'Liberation Sans', sans-serif;line-height:17px;color:#111;transform:scaleX(0.9834);">Dept\Acct Exceptions</span>
<span style="left:62.25px;top:737.00px;font:400 14px 'Liberation Sans', sans-serif;line-height:17px;color:#555;transform:scaleX(0.8561);">Save</span>
<span style="left:170.90px;top:737.00px;font:400 14.2px 'Liberation Sans', sans-serif;line-height:17px;color:#333;transform:scaleX(1.0232);">26611</span>
<span style="left:300.30px;top:737.00px;font:400 14.2px 'Liberation Sans', sans-serif;line-height:17px;color:#333;transform:scaleX(0.9959);">51020</span>
<span style="left:381.62px;top:737.00px;font:400 14px 'Liberation Sans', sans-serif;line-height:17px;color:#222;transform:scaleX(0.9833);">EMC Home Health</span>
<span style="left:700.70px;top:737.00px;font:400 14px 'Liberation Sans', sans-serif;line-height:17px;color:#555;transform:scaleX(0.9169);">OPDED_BlueCross</span>
<span style="left:891.72px;top:737.00px;font:400 14px 'Liberation Sans', sans-serif;line-height:17px;color:#555;transform:scaleX(0.9813);">Unused</span>
<span style="left:1083.72px;top:737.00px;font:400 14px 'Liberation Sans', sans-serif;line-height:17px;color:#555;transform:scaleX(0.9813);">Unused</span>
<span style="left:1275.72px;top:737.00px;font:400 14px 'Liberation Sans', sans-serif;line-height:17px;color:#555;transform:scaleX(0.9813);">Unused</span>
<span style="left:1467.72px;top:737.00px;font:400 14px 'Liberation Sans', sans-serif;line-height:17px;color:#555;transform:scaleX(0.9813);">Unused</span>
<span style="left:62.25px;top:762.00px;font:400 14px 'Liberation Sans', sans-serif;line-height:17px;color:#555;transform:scaleX(0.8561);">Save</span>
<span style="left:170.90px;top:762.00px;font:400 14.2px 'Liberation Sans', sans-serif;line-height:17px;color:#333;transform:scaleX(0.9959);">27200</span>
<span style="left:300.30px;top:762.00px;font:400 14.2px 'Liberation Sans', sans-serif;line-height:17px;color:#333;transform:scaleX(1.0232);">31100</span>
<span style="left:381.63px;top:762.00px;font:400 14px 'Liberation Sans', sans-serif;line-height:17px;color:#222;transform:scaleX(0.9669);">EMC Radiology - MRI (JobCode)</span>
<span style="left:699.73px;top:762.00px;font:400 14px 'Liberation Sans', sans-serif;line-height:17px;color:#555;transform:scaleX(0.9685);">MCareGlobal</span>
<span style="left:891.72px;top:762.00px;font:400 14px 'Liberation Sans', sans-serif;line-height:17px;color:#555;transform:scaleX(0.9813);">Unused</span>
<span style="left:1083.72px;top:762.00px;font:400 14px 'Liberation Sans', sans-serif;line-height:17px;color:#555;transform:scaleX(0.9813);">Unused</span>
<span style="left:1275.72px;top:762.00px;font:400 14px 'Liberation Sans', sans-serif;line-height:17px;color:#555;transform:scaleX(0.9813);">Unused</span>
<span style="left:1467.72px;top:762.00px;font:400 14px 'Liberation Sans', sans-serif;line-height:17px;color:#555;transform:scaleX(0.9813);">Unused</span>
<span style="left:62.25px;top:787.00px;font:400 14px 'Liberation Sans', sans-serif;line-height:17px;color:#555;transform:scaleX(0.8561);">Save</span>
<span style="left:170.90px;top:787.00px;font:400 14.2px 'Liberation Sans', sans-serif;line-height:17px;color:#333;transform:scaleX(0.9959);">27200</span>
<span style="left:300.30px;top:787.00px;font:400 14.2px 'Liberation Sans', sans-serif;line-height:17px;color:#333;transform:scaleX(0.9959);">31300</span>
<span style="left:381.63px;top:787.00px;font:400 14px 'Liberation Sans', sans-serif;line-height:17px;color:#222;transform:scaleX(0.9669);">EMC Radiology - MRI (JobCode)</span>
<span style="left:699.72px;top:787.00px;font:400 14px 'Liberation Sans', sans-serif;line-height:17px;color:#555;transform:scaleX(0.9813);">Unused</span>
<span style="left:891.76px;top:787.00px;font:400 14px 'Liberation Sans', sans-serif;line-height:17px;color:#555;transform:scaleX(0.9353);">BCGlobal</span>
<span style="left:1083.72px;top:787.00px;font:400 14px 'Liberation Sans', sans-serif;line-height:17px;color:#555;transform:scaleX(0.9813);">Unused</span>
<span style="left:1275.72px;top:787.00px;font:400 14px 'Liberation Sans', sans-serif;line-height:17px;color:#555;transform:scaleX(0.9813);">Unused</span>
<span style="left:1467.72px;top:787.00px;font:400 14px 'Liberation Sans', sans-serif;line-height:17px;color:#555;transform:scaleX(0.9813);">Unused</span>
<span style="left:248.50px;top:812.00px;font:400 14.2px 'Liberation Sans', sans-serif;line-height:17px;color:#555;">0</span>
<span style="left:364.50px;top:812.00px;font:400 14.2px 'Liberation Sans', sans-serif;line-height:17px;color:#555;">0</span>
<span style="left:382.60px;top:812.00px;font:400 14px 'Liberation Sans', sans-serif;line-height:17px;color:#222;transform:scaleX(1.0040);">&lt;= Enter Dept and Acct No.</span>
<span style="left:699.72px;top:812.00px;font:400 14px 'Liberation Sans', sans-serif;line-height:17px;color:#555;transform:scaleX(0.9813);">Unused</span>
<span style="left:891.72px;top:812.00px;font:400 14px 'Liberation Sans', sans-serif;line-height:17px;color:#555;transform:scaleX(0.9813);">Unused</span>
<span style="left:1083.72px;top:812.00px;font:400 14px 'Liberation Sans', sans-serif;line-height:17px;color:#555;transform:scaleX(0.9813);">Unused</span>
<span style="left:1275.72px;top:812.00px;font:400 14px 'Liberation Sans', sans-serif;line-height:17px;color:#555;transform:scaleX(0.9813);">Unused</span>
<span style="left:1467.72px;top:812.00px;font:400 14px 'Liberation Sans', sans-serif;line-height:17px;color:#555;transform:scaleX(0.9813);">Unused</span>
<span style="left:248.50px;top:837.00px;font:400 14.2px 'Liberation Sans', sans-serif;line-height:17px;color:#555;">0</span>
<span style="left:364.50px;top:837.00px;font:400 14.2px 'Liberation Sans', sans-serif;line-height:17px;color:#555;">0</span>
<span style="left:382.60px;top:837.00px;font:400 14px 'Liberation Sans', sans-serif;line-height:17px;color:#222;transform:scaleX(1.0040);">&lt;= Enter Dept and Acct No.</span>
<span style="left:699.72px;top:837.00px;font:400 14px 'Liberation Sans', sans-serif;line-height:17px;color:#555;transform:scaleX(0.9813);">Unused</span>
<span style="left:891.72px;top:837.00px;font:400 14px 'Liberation Sans', sans-serif;line-height:17px;color:#555;transform:scaleX(0.9813);">Unused</span>
<span style="left:1083.72px;top:837.00px;font:400 14px 'Liberation Sans', sans-serif;line-height:17px;color:#555;transform:scaleX(0.9813);">Unused</span>
<span style="left:1275.72px;top:837.00px;font:400 14px 'Liberation Sans', sans-serif;line-height:17px;color:#555;transform:scaleX(0.9813);">Unused</span>
<span style="left:1467.72px;top:837.00px;font:400 14px 'Liberation Sans', sans-serif;line-height:17px;color:#555;transform:scaleX(0.9813);">Unused</span>
<span style="left:248.50px;top:862.00px;font:400 14.2px 'Liberation Sans', sans-serif;line-height:17px;color:#555;">0</span>
<span style="left:364.50px;top:862.00px;font:400 14.2px 'Liberation Sans', sans-serif;line-height:17px;color:#555;">0</span>
<span style="left:382.60px;top:862.00px;font:400 14px 'Liberation Sans', sans-serif;line-height:17px;color:#222;transform:scaleX(1.0040);">&lt;= Enter Dept and Acct No.</span>
<span style="left:699.72px;top:862.00px;font:400 14px 'Liberation Sans', sans-serif;line-height:17px;color:#555;transform:scaleX(0.9813);">Unused</span>
<span style="left:891.72px;top:862.00px;font:400 14px 'Liberation Sans', sans-serif;line-height:17px;color:#555;transform:scaleX(0.9813);">Unused</span>
<span style="left:1083.72px;top:862.00px;font:400 14px 'Liberation Sans', sans-serif;line-height:17px;color:#555;transform:scaleX(0.9813);">Unused</span>
<span style="left:1275.72px;top:862.00px;font:400 14px 'Liberation Sans', sans-serif;line-height:17px;color:#555;transform:scaleX(0.9813);">Unused</span>
<span style="left:1467.72px;top:862.00px;font:400 14px 'Liberation Sans', sans-serif;line-height:17px;color:#555;transform:scaleX(0.9813);">Unused</span>
<span style="left:178.96px;top:899.00px;font:400 20.3px 'Liberation Sans', sans-serif;line-height:24px;color:#1f1f1f;-webkit-text-stroke:0.4px #1f1f1f;transform:scaleX(1.0393);">GlobalSum</span>
</div></body></html>
